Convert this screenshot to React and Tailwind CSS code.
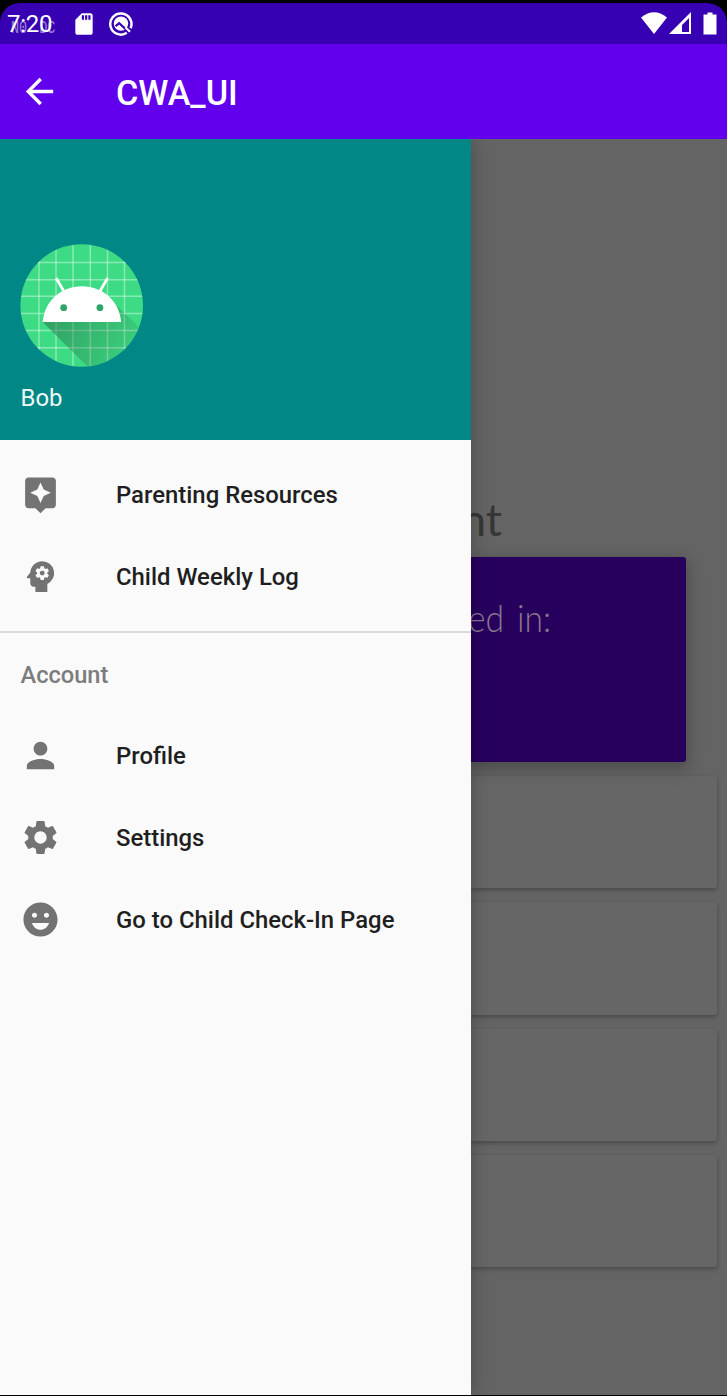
import React from "react";
import { MdAssistant, MdPsychology, MdPerson, MdSettings, MdEmojiEmotions, MdArrowBack, MdSdCard } from "react-icons/md";

function StatusBar() {
  return (
    <div className="h-[44px] shrink-0 bg-black pt-[3px]">
      <div className="flex h-[41px] items-center rounded-t-[20px] bg-[#3700b3] text-white">
        <div className="relative ml-[7px] w-[66px] text-[24px] leading-none tracking-[-0.3px]">
          7:20
          <span className="absolute left-[4px] top-[7px] flex origin-left scale-x-75 gap-[16px] font-['Liberation_Mono'] text-[18px] leading-none tracking-[0px] opacity-50">
            <span>N0</span>
            <span>DC</span>
          </span>
        </div>
        <MdSdCard className="h-[26px] w-[26px] -ml-[2px]" />
        <svg className="ml-[11px] h-[26px] w-[26px]" viewBox="0 0 26 26" fill="none">
          <path d="M18.8 21.8A10.6 10.6 0 1 1 22.6 17.2" stroke="#fff" strokeWidth="2.5" />
          <circle cx="13" cy="12.6" r="7.2" fill="#fff" />
          <path d="M7.6 15.2L11.2 12.2L18.5 19" stroke="#3700b3" strokeWidth="2.2" />
          <path d="M17.5 16.5L22 20.7" stroke="#fff" strokeWidth="2.2" />
        </svg>
        <svg className="ml-auto mr-[10px] h-[24px] w-[76px]" viewBox="0 0 76 24">
          <path d="M0 5.5Q13-5 26 5.5L13 22Z" fill="currentColor" />
          <path fillRule="evenodd" d="M28 22L50 0V22ZM41 20H48V6L41 13Z" fill="currentColor" />
          <path d="M66.5 .5h5v2h4v20H62.5V2.5h4Z" fill="currentColor" />
        </svg>
      </div>
    </div>
  );
}

function Avatar() {
  const columns = [19, 36, 53, 70.3, 87.5, 104.5];
  const rows = [18.5, 35.7, 52.3, 69.5, 86.5, 103.7];
  return (
    <svg className="h-[123px] w-[123px]" viewBox="0 0 123 123">
      <defs>
        <clipPath id="disc"><circle cx="61.7" cy="61.5" r="61.3" /></clipPath>
        <linearGradient id="shade" x1="35" y1="70" x2="105" y2="112" gradientUnits="userSpaceOnUse">
          <stop offset="0" stopColor="#246b43" stopOpacity=".5" />
          <stop offset="1" stopColor="#246b43" stopOpacity=".14" />
        </linearGradient>
      </defs>
      <g clipPath="url(#disc)">
        <rect width="123" height="123" fill="#3ddc84" />
        {columns.map((x) => <path key={x} d={`M${x} 0V123`} stroke="#fff" strokeOpacity=".4" strokeWidth="1.5" />)}
        {rows.map((y) => <path key={y} d={`M0 ${y}H123`} stroke="#fff" strokeOpacity=".4" strokeWidth="1.5" />)}
        <path d="M22.7 78L69 124H123V87L97 62Z" fill="url(#shade)" />
        <path d="M36.7 35L44 47.5M87 35L79.8 47.5" stroke="#fff" strokeWidth="2.7" strokeLinecap="round" />
        <path d="M22.7 78C24.5 57 41 42.3 61.9 42.3S99.3 57 101.1 78Z" fill="#fff" />
        <circle cx="43.7" cy="63.7" r="3.4" fill="#2fa566" />
        <circle cx="79.9" cy="63.7" r="3.4" fill="#2fa566" />
      </g>
    </svg>
  );
}

function MenuItem({ icon: Icon, label }) {
  return (
    <div className="flex h-[82px] items-center pl-[20px]">
      <Icon className="mb-[2px] h-[41px] w-[41px] text-[#737373]" />
      <span className="ml-[55px] pt-[2px] text-[23.9px] font-medium leading-none text-[#1f1f1f]">{label}</span>
    </div>
  );
}

function Drawer() {
  return (
    <aside className="relative z-10 flex w-[471px] shrink-0 flex-col bg-[#fafafa] shadow-[2px_0_16px_rgba(0,0,0,0.22)]">
      <div className="h-[301px] shrink-0 bg-[#018786] pl-[20px] pt-[105px]">
        <Avatar />
        <div className="mt-[18px] pl-[0.5px] text-[23.9px] leading-[26px] text-[#eefafa]">Bob</div>
      </div>
      <nav className="pt-[14px]">
        <MenuItem icon={MdAssistant} label="Parenting Resources" />
        <MenuItem icon={MdPsychology} label="Child Weekly Log" />
        <div className="mt-[13px] h-[2px] bg-[#dadada]" />
        <div className="flex h-[82px] items-center pl-[20.5px] pt-[3px] text-[23.6px] font-medium text-[#7c7c7c]">Account</div>
        <MenuItem icon={MdPerson} label="Profile" />
        <MenuItem icon={MdSettings} label="Settings" />
        <MenuItem icon={MdEmojiEmotions} label="Go to Child Check-In Page" />
      </nav>
    </aside>
  );
}

function Content() {
  return (
    <main className="min-w-0 flex-1 overflow-hidden bg-[#646464] pt-[352px]">
      <div className="-ml-[10px] h-[66px] font-['Lato',sans-serif] text-[45px] leading-[56px] text-[#363636]">nt</div>
      <div className="relative h-[205px] w-[215px] rounded-r-[3px] bg-[#27005e] pt-[38px] shadow-[0_5px_16px_2px_rgba(0,0,0,0.25)]">
        <div className="-ml-[3px] origin-left scale-x-[0.91] font-['Lato',sans-serif] text-[37px] font-light leading-[45px] text-[#8a768c] [word-spacing:4px]">ed in:</div>
      </div>
      <div className="mt-[14px] flex flex-col gap-[14px]">
        {[0, 1, 2, 3].map((i) => (
          <div key={i} className="h-[112.3px] w-[245.5px] rounded-r-[3px] bg-[#666] shadow-[0_2px_4px_rgba(0,0,0,0.28)]" />
        ))}
      </div>
    </main>
  );
}

export default function App() {
  return (
    <div className="flex h-[1396px] w-[727px] flex-col overflow-hidden border-b border-black bg-black font-['Roboto',sans-serif]">
      <StatusBar />
      <header className="relative z-20 flex h-[95px] shrink-0 items-center bg-[#6200ee] pl-[19px] text-white">
        <MdArrowBack className="h-[41px] w-[41px]" />
        <h1 className="ml-[56px] pt-[4px] text-[34.2px] font-medium leading-none">CWA_UI</h1>
      </header>
      <div className="flex min-h-0 flex-1">
        <Drawer />
        <Content />
      </div>
    </div>
  );
}
